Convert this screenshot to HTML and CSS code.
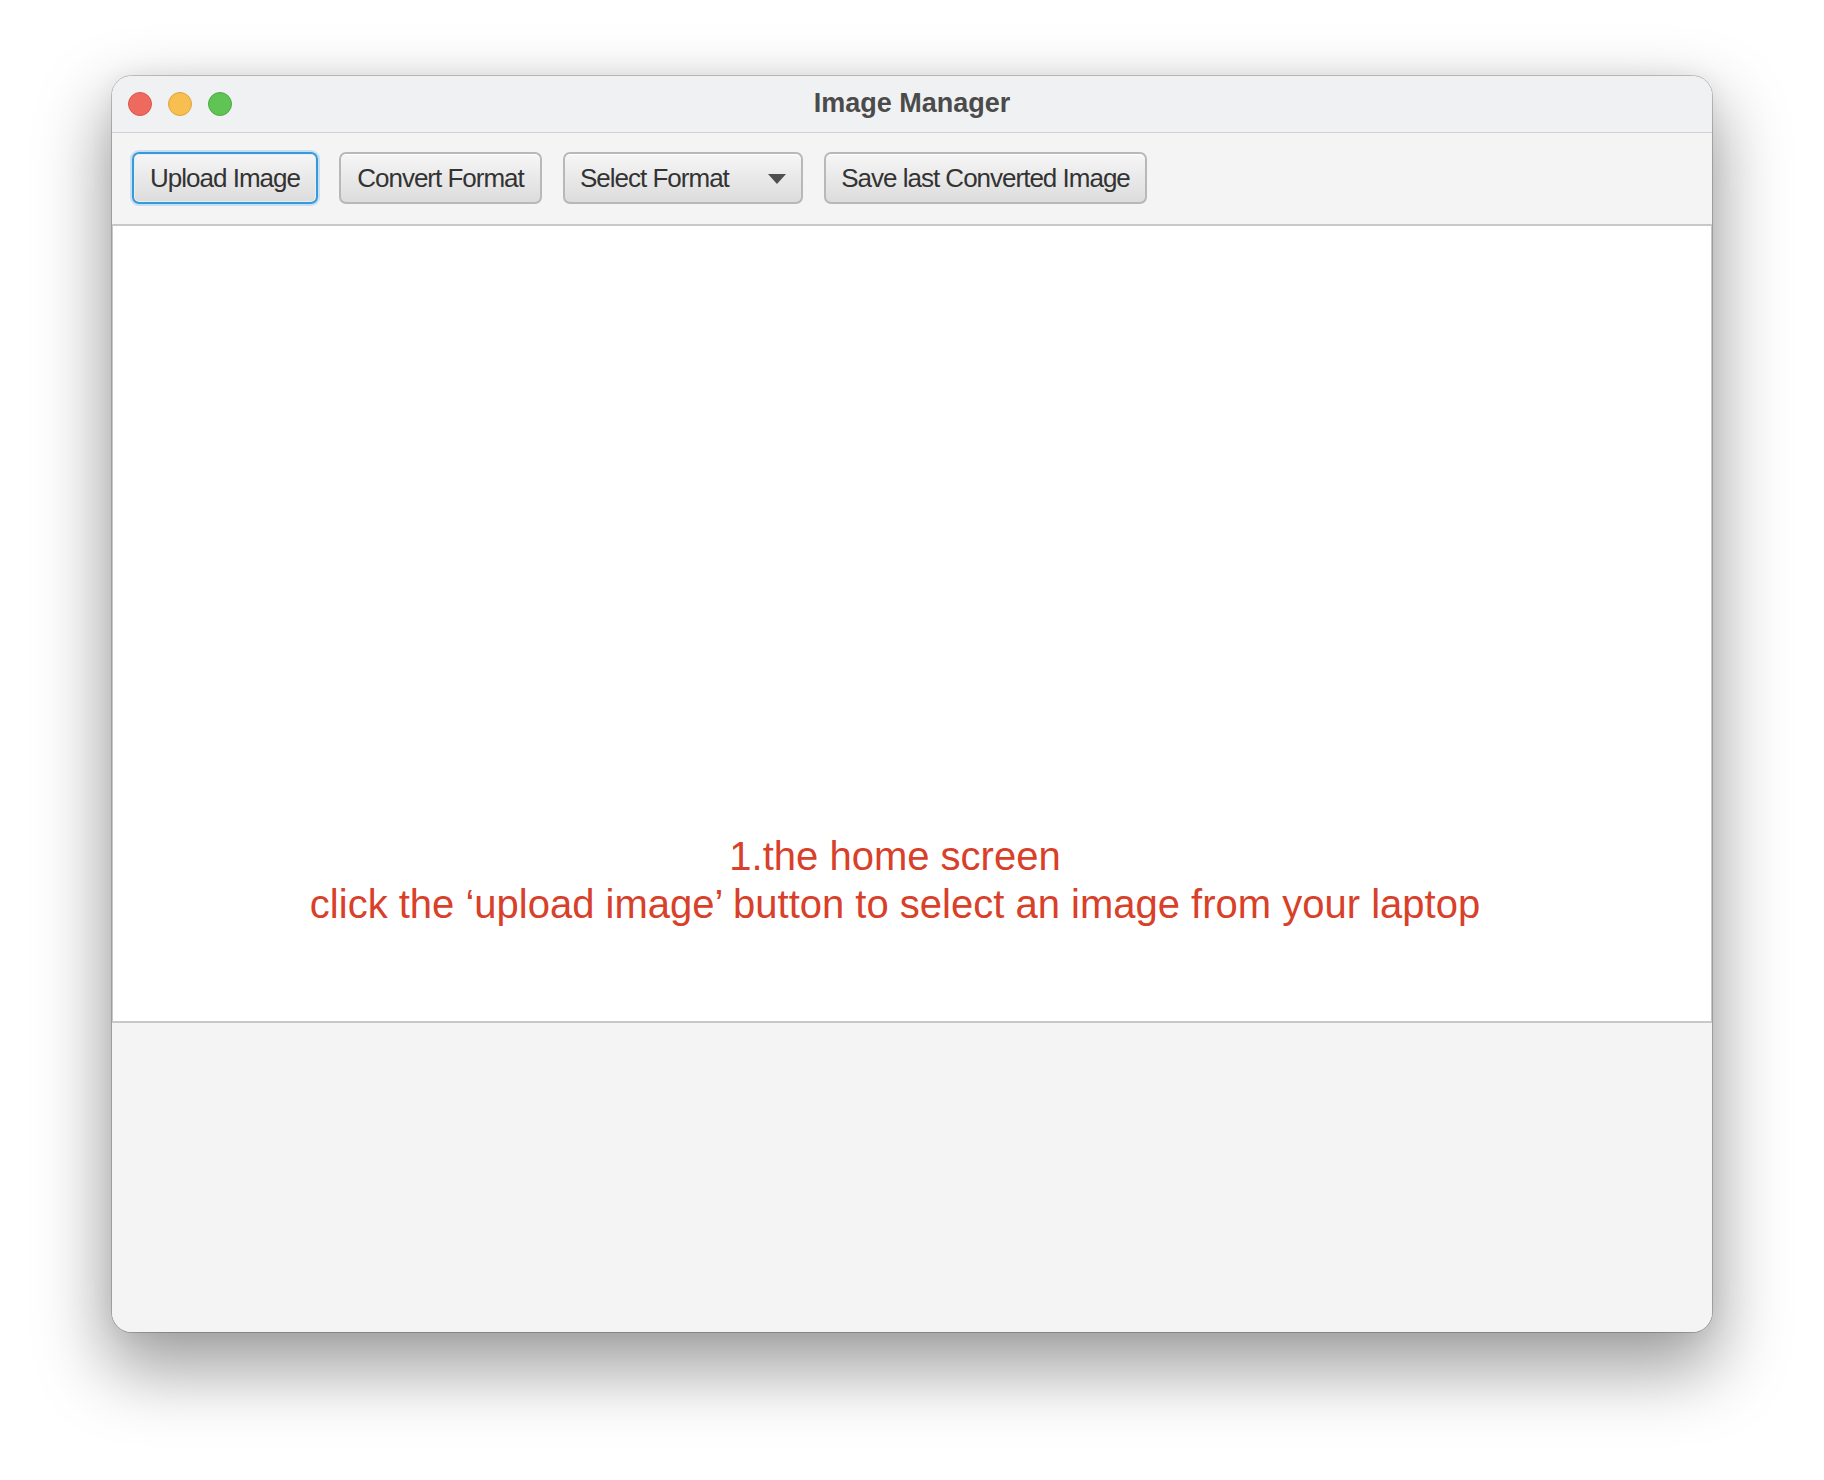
FILE: index.html
```html
<!DOCTYPE html>
<html lang="en">
<head>
<meta charset="utf-8">
<title>Image Manager</title>
<link rel="stylesheet" href="styles.css">
</head>
<body>
<div class="window">
  <div class="titlebar">
    <div class="lights">
      <span class="light light-red"></span>
      <span class="light light-yellow"></span>
      <span class="light light-green"></span>
    </div>
    <div class="title">Image Manager</div>
  </div>
  <div class="toolbar">
    <button class="btn btn-upload btn-focus">Upload Image</button>
    <button class="btn btn-convert">Convert Format</button>
    <button class="btn btn-select"><span>Select Format</span><span class="caret"></span></button>
    <button class="btn btn-save">Save last Converted Image</button>
  </div>
  <div class="content">
    <div class="note">
      <div>1.the home screen</div>
      <div>click the ‘upload image’ button to select an image from your laptop</div>
    </div>
  </div>
  <div class="bottom"></div>
</div>
</body>
</html>
```

FILE: styles.css
```css
html, body {
  margin: 0;
  padding: 0;
  background: #ffffff;
}

body {
  width: 1824px;
  height: 1480px;
  overflow: hidden;
}

.window {
  margin: 76px 0 0 112px;
  width: 1600px;
  height: 1256px;
  border-radius: 20px;
  overflow: hidden;
  display: flex;
  flex-direction: column;
  background: #f4f4f4;
  box-shadow: 0 0 0 1px rgba(0, 0, 0, 0.2), 0 32px 70px 6px rgba(0, 0, 0, 0.38), 0 0 24px rgba(0, 0, 0, 0.06);
}

.titlebar {
  height: 56px;
  flex: none;
  background: #f0f1f3;
  border-bottom: 1px solid #d2d2d4;
  position: relative;
  display: flex;
  align-items: center;
  justify-content: center;
}

.lights {
  position: absolute;
  left: 16px;
  top: 16px;
  display: flex;
  gap: 16px;
}

.light {
  width: 22px;
  height: 22px;
  border-radius: 50%;
  display: block;
}

.light-red { background: #ee6a5f; border: 1px solid #d9574c; }
.light-yellow { background: #f6bf4f; border: 1px solid #dea33f; }
.light-green { background: #5fc454; border: 1px solid #4eaa42; }

.title {
  font-family: "Liberation Sans", Arial, sans-serif;
  font-weight: bold;
  font-size: 27px;
  color: #4b4b4b;
  margin-top: -2px;
}

.toolbar {
  height: 91px;
  flex: none;
  box-sizing: border-box;
  padding: 19px 20px 0 20px;
  display: flex;
  gap: 21px;
  align-items: flex-start;
  background: #f4f4f4;
}

.btn {
  height: 52px;
  box-sizing: border-box;
  border: 2px solid #b8b8b8;
  border-radius: 7px;
  background: linear-gradient(#f6f6f6, #dcdcdc);
  box-shadow: inset 0 1px 0 #ffffff;
  font-family: "Liberation Sans", Arial, sans-serif;
  font-size: 26px;
  letter-spacing: -1px;
  color: #333333;
  padding: 0;
  display: flex;
  align-items: center;
  justify-content: center;
}

.btn-focus {
  border-color: #3a98d8;
  box-shadow: 0 0 0 2px #c4e0f4, inset 0 0 0 1px #e4eef6;
}

.btn-upload { width: 186px; }
.btn-convert { width: 203px; }
.btn-save { width: 323px; }

.btn-select {
  width: 240px;
  justify-content: space-between;
  padding: 0 15px 0 15px;
}

.caret {
  width: 0;
  height: 0;
  border-left: 9px solid transparent;
  border-right: 9px solid transparent;
  border-top: 10px solid #4f4f4f;
  margin-top: 2px;
}

.content {
  height: 799px;
  flex: none;
  box-sizing: border-box;
  background: #ffffff;
  border-top: 2px solid #c8c8c8;
  border-bottom: 2px solid #c8c8c8;
  border-left: 1px solid #c8c8c8;
  border-right: 1px solid #c8c8c8;
  display: flex;
  flex-direction: column;
  justify-content: flex-end;
  padding: 0 34px 93px 0;
}

.note {
  font-family: "Liberation Sans", Arial, Helvetica, sans-serif;
  font-size: 40px;
  line-height: 48px;
  color: #d8402a;
  text-align: center;
}

.bottom {
  flex: 1;
  background: #f4f4f4;
}
```
